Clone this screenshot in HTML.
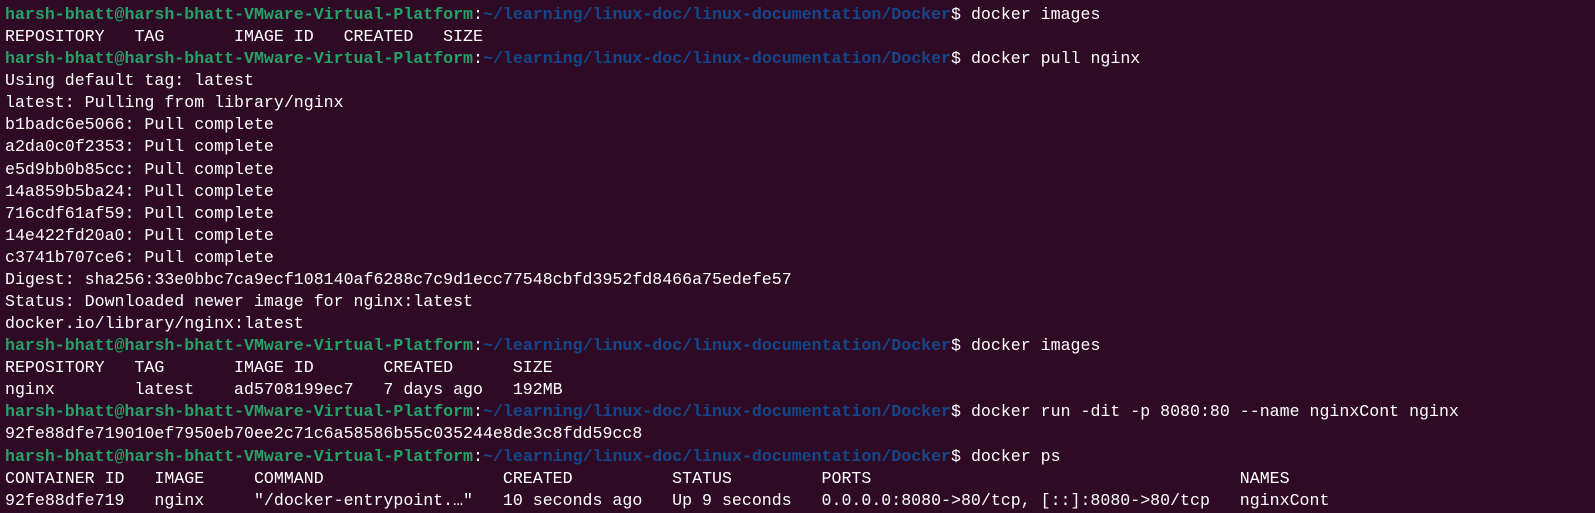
<!DOCTYPE html>
<html><head><meta charset="utf-8"><style>
html,body{margin:0;padding:0;background:#2f0a24;width:1595px;height:513px;overflow:hidden}
pre{margin:0;padding:4px 0 0 5px;font-family:"Liberation Mono",monospace;font-size:16.6px;line-height:22.08px;color:#ffffff;white-space:pre}
.g{color:#26a269;font-weight:bold}.b{color:#12488b;font-weight:bold}
</style></head><body><pre><span class="g">harsh-bhatt@harsh-bhatt-VMware-Virtual-Platform</span>:<span class="b">~/learning/linux-doc/linux-documentation/Docker</span>$ docker images
REPOSITORY   TAG       IMAGE ID   CREATED   SIZE
<span class="g">harsh-bhatt@harsh-bhatt-VMware-Virtual-Platform</span>:<span class="b">~/learning/linux-doc/linux-documentation/Docker</span>$ docker pull nginx
Using default tag: latest
latest: Pulling from library/nginx
b1badc6e5066: Pull complete
a2da0c0f2353: Pull complete
e5d9bb0b85cc: Pull complete
14a859b5ba24: Pull complete
716cdf61af59: Pull complete
14e422fd20a0: Pull complete
c3741b707ce6: Pull complete
Digest: sha256:33e0bbc7ca9ecf108140af6288c7c9d1ecc77548cbfd3952fd8466a75edefe57
Status: Downloaded newer image for nginx:latest
docker.io/library/nginx:latest
<span class="g">harsh-bhatt@harsh-bhatt-VMware-Virtual-Platform</span>:<span class="b">~/learning/linux-doc/linux-documentation/Docker</span>$ docker images
REPOSITORY   TAG       IMAGE ID       CREATED      SIZE
nginx        latest    ad5708199ec7   7 days ago   192MB
<span class="g">harsh-bhatt@harsh-bhatt-VMware-Virtual-Platform</span>:<span class="b">~/learning/linux-doc/linux-documentation/Docker</span>$ docker run -dit -p 8080:80 --name nginxCont nginx
92fe88dfe719010ef7950eb70ee2c71c6a58586b55c035244e8de3c8fdd59cc8
<span class="g">harsh-bhatt@harsh-bhatt-VMware-Virtual-Platform</span>:<span class="b">~/learning/linux-doc/linux-documentation/Docker</span>$ docker ps
CONTAINER ID   IMAGE     COMMAND                  CREATED          STATUS         PORTS                                     NAMES
92fe88dfe719   nginx     "/docker-entrypoint.…"   10 seconds ago   Up 9 seconds   0.0.0.0:8080->80/tcp, [::]:8080->80/tcp   nginxCont</pre></body></html>
